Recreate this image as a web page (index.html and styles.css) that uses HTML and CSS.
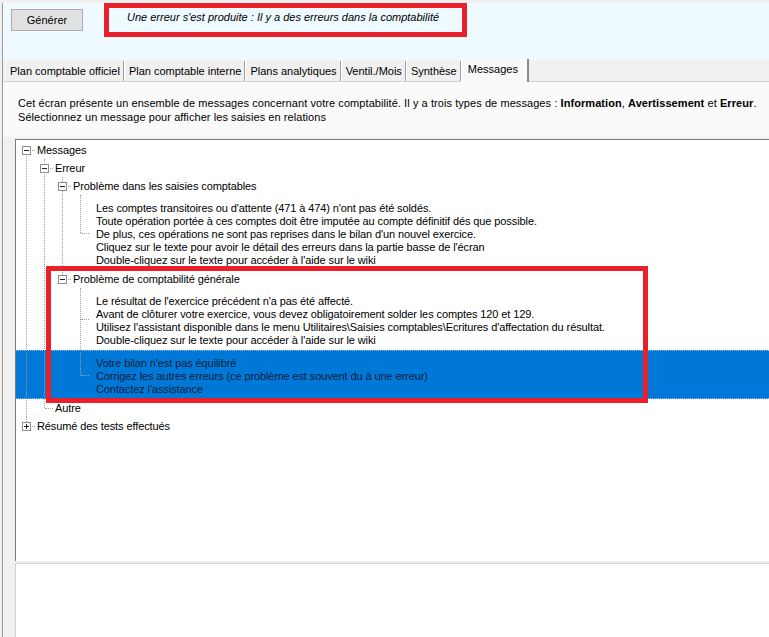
FILE: index.html
```html
<!DOCTYPE html>
<html lang="fr">
<head>
    <meta charset="UTF-8">
    <meta name="viewport" content="width=device-width, initial-scale=1.0">
    <title>Contrôle de la comptabilité</title>
    <link rel="stylesheet" href="styles.css">
</head>
<body>
    <div class="frame">
        <div class="top-panel">
            <button class="btn">Générer</button>
            <div class="status">Une erreur s'est produite : Il y a des erreurs dans la comptabilité</div>
        </div>

        <div class="tabs">
            <div class="tab">Plan comptable officiel</div>
            <div class="tab">Plan comptable interne</div>
            <div class="tab">Plans analytiques</div>
            <div class="tab">Ventil./Mois</div>
            <div class="tab">Synthèse</div>
            <div class="tab active">Messages</div>
        </div>

        <div class="tab-page">
            <p class="intro">
                Cet écran présente un ensemble de messages concernant votre comptabilité. Il y a trois types de messages : <b>Information</b>, <b>Avertissement</b> et <b>Erreur</b>.<br>
                Sélectionnez un message pour afficher les saisies en relations
            </p>

            <div class="split">
                <div class="tree-box">
                    <ul class="tree">
                        <li class="first">
                            <div class="node"><span class="exp"></span>Messages</div>
                            <ul>
                                <li>
                                    <div class="node"><span class="exp"></span>Erreur</div>
                                    <ul>
                                        <li>
                                            <div class="node"><span class="exp"></span>Problème dans les saisies comptables</div>
                                            <ul>
                                                <li class="block last">
                                                    <div class="node">
                                                        Les comptes transitoires ou d'attente (471 à 474) n'ont pas été soldés.<br>
                                                        Toute opération portée à ces comptes doit être imputée au compte définitif dés que possible.<br>
                                                        De plus, ces opérations ne sont pas reprises dans le bilan d'un nouvel exercice.<br>
                                                        Cliquez sur le texte pour avoir le détail des erreurs dans la partie basse de l'écran<br>
                                                        Double-cliquez sur le texte pour accéder à l'aide sur le wiki
                                                    </div>
                                                </li>
                                            </ul>
                                        </li>
                                        <li class="last">
                                            <div class="node"><span class="exp"></span>Problème de comptabilité générale</div>
                                            <ul>
                                                <li class="block">
                                                    <div class="node">
                                                        Le résultat de l'exercice précédent n'a pas été affecté.<br>
                                                        Avant de clôturer votre exercice, vous devez obligatoirement solder les comptes 120 et 129.<br>
                                                        Utilisez l'assistant disponible dans le menu Utilitaires\Saisies comptables\Ecritures d'affectation du résultat.<br>
                                                        Double-cliquez sur le texte pour accéder à l'aide sur le wiki
                                                    </div>
                                                </li>
                                                <li class="block last selected">
                                                    <div class="node">
                                                        Votre bilan n'est pas équilibré<br>
                                                        Corrigez les autres erreurs (ce problème est souvent du à une erreur)<br>
                                                        Contactez l'assistance
                                                    </div>
                                                </li>
                                            </ul>
                                        </li>
                                    </ul>
                                </li>
                                <li class="last">
                                    <div class="node">Autre</div>
                                </li>
                            </ul>
                        </li>
                        <li class="last">
                            <div class="node"><span class="exp plus"></span>Résumé des tests effectués</div>
                        </li>
                    </ul>
                    <div class="mark"></div>
                </div>
                <div class="detail"></div>
            </div>
        </div>
    </div>
</body>
</html>
```

FILE: styles.css
```css
body {
    margin: 0;
    padding-top: 3px;
    background: #f0f0f0;
    font-family: "Liberation Sans", Arial, sans-serif;
    font-size: 11px;
    color: #000;
    overflow: hidden;
}
.frame {
    margin-left: 2px;
    border-left: 1px solid #9a9a9a;
    height: 634px;
}

/* top bar */
.top-panel {
    height: 57px;
    background: #eefaff;
    display: flex;
    align-items: flex-start;
    padding-left: 8px;
}
.btn {
    margin-top: 6px;
    width: 72px;
    height: 22px;
    background: #e1e1e1;
    border: 1px solid #adadad;
    font-family: "Liberation Sans", Arial, sans-serif;
    font-size: 11px;
    color: #000;
    padding: 0;
}
.status {
    margin-left: 21px;
    width: 363px;
    height: 34px;
    box-sizing: border-box;
    border: 5px solid #e9202a;
    padding: 3px 0 0 18px;
    line-height: 13px;
    font-style: italic;
    background: #eefaff;
}

/* tabs */
.tabs {
    height: 22px;
    display: flex;
    align-items: flex-end;
    padding-left: 2px;
    border-bottom: 1px solid #d2d2d2;
    box-sizing: border-box;
}
.tab {
    height: 20px;
    line-height: 21px;
    padding: 0 3px 0 4px;
    border-left: 1px solid #fff;
    border-right: 1px solid #a0a0a0;
    white-space: nowrap;
}
.tab.active {
    height: 23px;
    line-height: 20px;
    margin-bottom: -1px;
    padding: 0 9px 0 6px;
    background: #f9f9f9;
    border-right: 2px solid #8c8c8c;
}

/* tab page */
.tab-page {
    background: #fafafa;
}
.intro {
    margin: 0;
    padding: 14px 0 13px 15px;
    line-height: 14px;
    letter-spacing: 0.07px;
    white-space: nowrap;
}
.split {
    background: #f0f0f0;
    padding: 2px 0 0 12px;
}
.tree-box {
    position: relative;
    height: 421px;
    background: #fff;
    border-top: 1px solid #7a7a7a;
    border-left: 1px solid #7a7a7a;
    overflow: hidden;
}
.detail {
    margin-top: 2px;
    height: 80px;
    background: #fff;
    border-top: 1px solid #d8d8d8;
    border-left: 1px solid #d0d0d0;
}

/* tree */
.tree,
.tree ul {
    list-style: none;
    margin: 0;
    padding: 0;
}
.tree {
    padding-left: 6px;
    padding-top: 1px;
    letter-spacing: -0.1px;
}
.tree ul {
    padding-left: 18px;
}
.tree li {
    position: relative;
}
.tree li::before {
    content: "";
    position: absolute;
    left: 4px;
    top: 0;
    bottom: 0;
    border-left: 1px dotted #a0a0a0;
    z-index: 1;
}
.tree li.first::before {
    top: 9px;
}
.tree li.last::before {
    bottom: auto;
    height: 9px;
}
.tree li::after {
    content: "";
    position: absolute;
    left: 5px;
    top: 9px;
    width: 8px;
    border-top: 1px dotted #a0a0a0;
    z-index: 1;
}
.node {
    position: relative;
    height: 18px;
    line-height: 18px;
    padding-left: 15px;
    white-space: nowrap;
}
.exp {
    position: absolute;
    left: 0;
    top: 5px;
    width: 9px;
    height: 9px;
    box-sizing: border-box;
    border: 1px solid #8e8e8e;
    background: #fff;
    z-index: 2;
}
.exp::before {
    content: "";
    position: absolute;
    left: 1px;
    top: 3px;
    width: 5px;
    height: 1px;
    background: #222;
}
.exp.plus::after {
    content: "";
    position: absolute;
    left: 3px;
    top: 1px;
    width: 1px;
    height: 5px;
    background: #222;
}

/* multi-line message entries */
.tree li.block::after {
    top: 50%;
}
.tree li.block.last::before {
    height: 50%;
}
.block .node {
    height: auto;
    line-height: 13px;
    padding: 7px 0 3px 20px;
}
.block.selected .node {
    margin-left: -60px;
    padding: 6px 0 2px 80px;
    background: #0078d7;
    color: #0b1d3a;
    border-top: 1px dotted #8fc3ee;
    border-bottom: 1px dotted #8fc3ee;
}

/* red annotation frame */
.mark {
    position: absolute;
    left: 30px;
    top: 126px;
    width: 602px;
    height: 137px;
    box-sizing: border-box;
    border: 5px solid #e9202a;
    z-index: 3;
}
```
